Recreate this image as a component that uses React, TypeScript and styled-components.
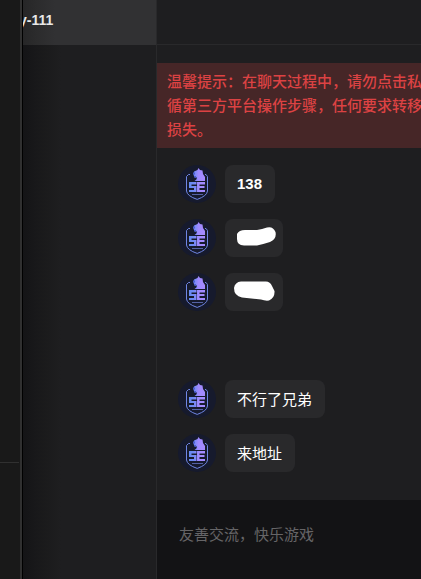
import React from "react";
import styled, { createGlobalStyle } from "styled-components";

const GlobalStyle = createGlobalStyle`
  * { box-sizing: border-box; }
  body {
    margin: 0;
    background: #1e1e20;
    color: #fff;
    font-family: "Liberation Sans", "Noto Sans CJK SC", sans-serif;
    font-size: 15px;
    overflow: hidden;
  }
`;

const Layout = styled.div`
  display: flex;
  height: 100vh;
  overflow: hidden;
`;

const Rail = styled.nav`
  flex: none;
  display: flex;
  flex-direction: column;
  justify-content: flex-end;
  width: 23px;
  background: #191919;
  border-right: 1px solid #000;
  box-shadow: inset -2px 0 #303030;
`;

const RailFooter = styled.div`
  height: 117px;
  margin-right: 3px;
  border-top: 1px solid #303030;
`;

const Sidebar = styled.aside`
  flex: none;
  width: 134px;
  border-right: 1px solid #29292b;
  background: linear-gradient(to right, #141416, #18181a 12px, #1b1b1c 24px, #1e1e20 38px);
`;

const Conversation = styled.button`
  display: flex;
  justify-content: flex-start;
  align-items: center;
  width: 100%;
  height: 45px;
  padding: 0 0 6px;
  border: 0;
  overflow: hidden;
  background: linear-gradient(to right, #262627, #2b2b2c 12px, #313133 32px);
  color: #e8e8e8;
  font: bold 14px "Liberation Sans", sans-serif;
`;

const ConversationName = styled.span`
  margin-left: -4px;
`;

const Chat = styled.main`
  flex: 1;
  min-width: 0;
  display: flex;
  flex-direction: column;
`;

const ChatHeader = styled.header`
  flex: none;
  height: 45px;
  border-bottom: 1px solid #29292b;
`;

const Notice = styled.div`
  flex: none;
  margin-top: 18px;
  padding: 6px 0 7px 10px;
  overflow: hidden;
  background: #462627;
  color: #dc4243;
  font-family: "Noto Sans CJK SC", sans-serif;
  font-weight: 500;
  line-height: 24px;
`;

const NoticeLine = styled.p`
  margin: 0;
  white-space: nowrap;
`;

const Messages = styled.ul`
  flex: 1;
  min-height: 0;
  display: flex;
  flex-direction: column;
  gap: 16px;
  margin: 0;
  padding: 17px 21px 0;
  list-style: none;
`;

const Message = styled.li<{ $afterBreak?: boolean }>`
  display: flex;
  gap: 9px;
  height: 38px;
  margin-top: ${(p) => (p.$afterBreak ? 53 : 0)}px;
`;

const AvatarSvg = styled.svg`
  flex: none;
  width: 38px;
  height: 38px;
`;

const Bubble = styled.div<{ $bold?: boolean }>`
  display: flex;
  align-items: center;
  padding: 0 13px 2px 12px;
  border-radius: 8px;
  background: #29292b;
  font-family: ${(p) => (p.$bold ? '"Liberation Sans"' : '"Noto Sans CJK SC"')}, sans-serif;
  font-weight: ${(p) => (p.$bold ? 700 : 400)};
  white-space: nowrap;
`;

const ScribbleBubble = styled(Bubble)`
  padding: 0 7px;
`;

const Composer = styled.footer`
  flex: none;
  height: 79px;
  padding: 21px 22px;
  background: #131315;
`;

const MessageInput = styled.input`
  display: block;
  width: 100%;
  height: 26px;
  padding: 0;
  border: 0;
  outline: 0;
  background: transparent;
  color: #fff;
  font: inherit;

  &::placeholder {
    color: #666567;
    opacity: 1;
  }
`;

function Avatar({ id }: { id: string }) {
  const fill = `url(#${id})`;
  return (
    <AvatarSvg viewBox="0 0 38 38" aria-hidden="true">
      <defs>
        <linearGradient id={id} gradientUnits="userSpaceOnUse" x1="8" y1="0" x2="26" y2="0">
          <stop offset="0" stopColor="#5f8df0" />
          <stop offset="0.45" stopColor="#7189f4" />
          <stop offset="0.7" stopColor="#a08aff" />
          <stop offset="1" stopColor="#a58bff" />
        </linearGradient>
      </defs>
      <circle cx="19" cy="19" r="19" fill="#161a2d" />
      <path
        d="M12 9.5H10.5L8.5 11.5V26Q9 31 19.2 34.4Q29 31 29.5 26V11.5L28 9.5H27"
        fill="none"
        stroke="#6f86e4"
      />
      <path
        d="M16 6.5L19.5 5L20.5 3L22 5L24.5 5.5L25 9L27 12V16H16.5Q19 14.5 19 12.5L17 12.5L15.5 10Z"
        fill={fill}
      />
      <path d="M15 7.5H17V9.5H15ZM16 11H18V12.5H16Z" fill="#4b5ed0" />
      <path d="M11 17H18.5V19.5H13.5V21H18.5V27H11V25H16V23H11Z" fill={fill} />
      <path d="M19 17H27V19.5H21.5V21H26.5V23H21.5V25H27V27H19Z" fill={fill} />
      <path d="M14 29.5H25" stroke="#5562a4" />
    </AvatarSvg>
  );
}

export default function App() {
  return (
    <>
      <GlobalStyle />
      <Layout>
        <Rail>
          <RailFooter />
        </Rail>
        <Sidebar>
          <Conversation type="button">
            <ConversationName>y-111</ConversationName>
          </Conversation>
        </Sidebar>
        <Chat>
          <ChatHeader />
          <Notice role="note">
            <NoticeLine>温馨提示：在聊天过程中，请勿点击私</NoticeLine>
            <NoticeLine>循第三方平台操作步骤，任何要求转移</NoticeLine>
            <NoticeLine>损失。</NoticeLine>
          </Notice>
          <Messages>
            <Message>
              <Avatar id="avatar-1" />
              <Bubble $bold>138</Bubble>
            </Message>
            <Message>
              <Avatar id="avatar-2" />
              <ScribbleBubble>
                <svg width="44" height="38" viewBox="0 0 44 38" aria-hidden="true">
                  <path
                    d="M5 15Q7 11 13 11H25Q30 10 35 8.5Q41 7 43.5 13Q45 20 38 23Q31 25 25 26.5H12Q5 26 5 20Z"
                    fill="#fff"
                  />
                </svg>
              </ScribbleBubble>
            </Message>
            <Message>
              <Avatar id="avatar-3" />
              <ScribbleBubble>
                <svg width="44" height="38" viewBox="0 0 44 38" aria-hidden="true">
                  <path
                    d="M2 15Q3 9 9 8.5H33Q38 8 40 13L42.5 18Q43 25 37 27.5Q33 28 29 26.5L10 24.5Q2 23 2 15Z"
                    fill="#fff"
                  />
                </svg>
              </ScribbleBubble>
            </Message>
            <Message $afterBreak>
              <Avatar id="avatar-4" />
              <Bubble>不行了兄弟</Bubble>
            </Message>
            <Message>
              <Avatar id="avatar-5" />
              <Bubble>来地址</Bubble>
            </Message>
          </Messages>
          <Composer>
            <MessageInput aria-label="聊天消息" placeholder="友善交流，快乐游戏" />
          </Composer>
        </Chat>
      </Layout>
    </>
  );
}
